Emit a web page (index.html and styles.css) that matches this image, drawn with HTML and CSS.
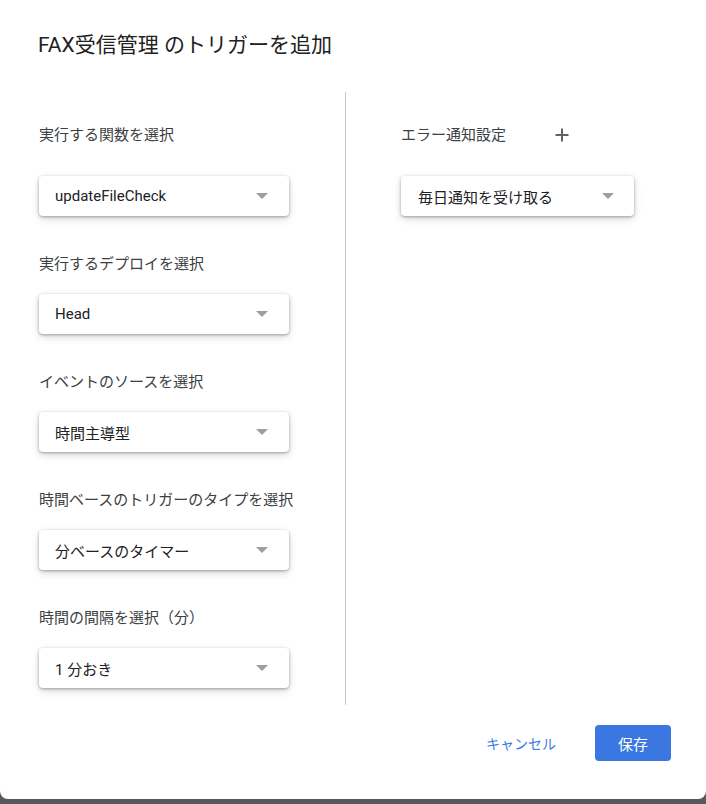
FILE: index.html
```html
<!DOCTYPE html>
<html lang="ja">
<head>
<meta charset="utf-8">
<title>トリガーを追加</title>
<link rel="stylesheet" href="styles.css">
</head>
<body>
<div class="dialog">
  <h1 class="title">FAX受信管理 のトリガーを追加</h1>
  <div class="content">
    <div class="col col-left">
      <div class="field">
        <div class="head"><span class="label">実行する関数を選択</span></div>
        <div class="select"><span>updateFileCheck</span><i class="arrow"></i></div>
      </div>
      <div class="field">
        <div class="label">実行するデプロイを選択</div>
        <div class="select"><span>Head</span><i class="arrow"></i></div>
      </div>
      <div class="field">
        <div class="label">イベントのソースを選択</div>
        <div class="select"><span>時間主導型</span><i class="arrow"></i></div>
      </div>
      <div class="field">
        <div class="label">時間ベースのトリガーのタイプを選択</div>
        <div class="select"><span>分ベースのタイマー</span><i class="arrow"></i></div>
      </div>
      <div class="field">
        <div class="label">時間の間隔を選択（分）</div>
        <div class="select"><span>1 分おき</span><i class="arrow"></i></div>
      </div>
    </div>
    <div class="col col-right">
      <div class="field">
        <div class="head">
          <span class="label">エラー通知設定</span>
          <button class="plus" aria-label="追加">
            <svg width="14" height="14" viewBox="0 0 14 14"><path d="M7 0.5V13.5M0.5 7H13.5" stroke="#5f6368" stroke-width="2" fill="none"/></svg>
          </button>
        </div>
        <div class="select select-narrow"><span>毎日通知を受け取る</span><i class="arrow"></i></div>
      </div>
    </div>
  </div>
  <div class="footer">
    <button class="btn-text">キャンセル</button>
    <button class="btn-primary">保存</button>
  </div>
</div>
</body>
</html>
```
FILE: styles.css
```css
* { box-sizing: border-box; }
html, body { margin: 0; padding: 0; }
body {
  background: #595959;
  width: 706px;
  height: 804px;
  overflow: hidden;
  font-family: Roboto, "Noto Sans CJK JP", sans-serif;
}
.dialog {
  width: 706px;
  height: 799px;
  background: #fff;
  border-radius: 0 0 8px 8px;
  display: flex;
  flex-direction: column;
}
.title {
  margin: 0;
  padding: 31px 0 0 38px;
  height: 92px;
  font-size: 21px;
  line-height: 28px;
  font-weight: 400;
  color: #212121;
}
.content {
  display: flex;
  height: 613px;
}
.col {
  display: flex;
  flex-direction: column;
  gap: 38px;
  padding-top: 23px;
}
.col-left {
  width: 346px;
  padding-left: 39px;
  padding-right: 56px;
  border-right: 1px solid #c8c8c8;
}
.col-right {
  padding-left: 55px;
}
.field {
  display: flex;
  flex-direction: column;
}
.head {
  height: 40px;
  display: flex;
  align-items: center;
  margin-bottom: 21px;
}
.label {
  font-size: 15px;
  line-height: 20px;
  color: #3c4043;
  margin-bottom: 20px;
  white-space: nowrap;
}
.head .label { margin-bottom: 0; }
.select {
  width: 250px;
  height: 40px;
  border-radius: 4px;
  background: #fff;
  box-shadow: 0 1px 3px rgba(0,0,0,0.32), 0 3px 8px rgba(0,0,0,0.14);
  display: flex;
  align-items: center;
  justify-content: space-between;
  padding: 0 21px 0 16px;
  font-size: 15px;
  color: #202124;
}
.select-narrow { width: 233px; padding-left: 17px; padding-right: 20px; }
.arrow {
  width: 0;
  height: 0;
  border-left: 6px solid transparent;
  border-right: 6px solid transparent;
  border-top: 6px solid #9e9e9e;
}
.plus {
  margin-left: 36px;
  width: 40px;
  height: 40px;
  border: 0;
  background: none;
  padding: 0;
  display: flex;
  align-items: center;
  justify-content: center;
  cursor: pointer;
}
.footer {
  display: flex;
  justify-content: flex-end;
  align-items: center;
  padding: 20px 35px 0 0;
  gap: 23px;
}
.footer button {
  font-family: Roboto, "Noto Sans CJK JP", sans-serif;
  height: 36px;
  border: 0;
  border-radius: 4px;
  cursor: pointer;
}
.btn-text {
  background: none;
  color: #3b78e7;
  font-size: 14px;
  padding: 0 16px;
}
.btn-primary {
  width: 76px;
  background: #3a77e1;
  color: #fff;
  font-size: 15px;
}
```
